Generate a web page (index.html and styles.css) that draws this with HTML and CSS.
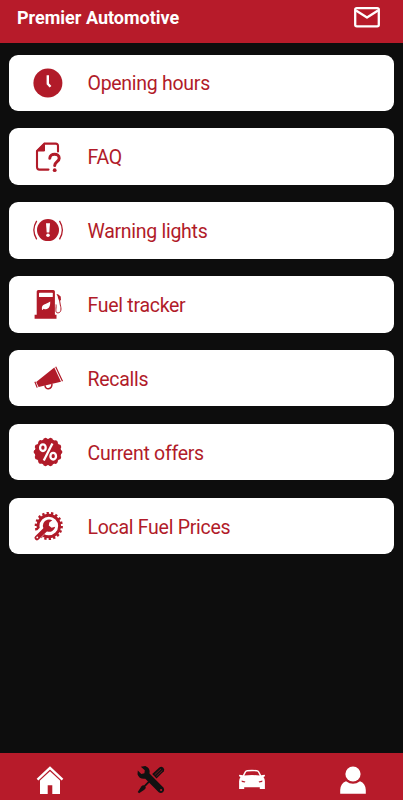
FILE: index.html
```html
<!DOCTYPE html>
<html lang="en">
<head>
    <meta charset="UTF-8">
    <meta name="viewport" content="width=device-width, initial-scale=1.0">
    <title>Premier Automotive</title>
    <link rel="stylesheet" href="styles.css">
</head>
<body>
    <header class="app-header">
        <h1 class="app-title">Premier Automotive</h1>
        <a href="#" class="mail-link" aria-label="Messages">
            <svg width="26" height="22" viewBox="0 0 26 22" fill="none" stroke="currentColor" stroke-width="2.3" stroke-linejoin="round">
                <rect x="1.2" y="1.2" width="23.6" height="18.2" rx="1.6"/>
                <path d="M2 3.5 13 10.5 24 3.5"/>
            </svg>
        </a>
    </header>

    <main class="menu">
        <a href="#" class="menu-item">
            <svg class="menu-icon" viewBox="0 0 32 32">
                <circle cx="15.9" cy="16" r="14.5" fill="currentColor"/>
                <path d="M15.8 8.3V16.8L18.5 19.8" fill="none" stroke="#fff" stroke-width="2.4"/>
            </svg>
            <span>Opening hours</span>
        </a>
        <a href="#" class="menu-item">
            <svg class="menu-icon" viewBox="0 0 32 32" fill="none" stroke="currentColor" stroke-width="2.1" stroke-linecap="round" stroke-linejoin="round">
                <path d="M26 10.5V5Q26 2.6 23.6 2.6H12.5L5 10V26Q5 28.6 7.6 28.6H16.5"/>
                <path d="M12.5 2.6V10H5Z" fill="currentColor" stroke-width="1"/>
                <path d="M17.8 17.2C18 11.9 27.2 12 27.2 17.2C27.2 20.6 22.7 20.7 22.7 24.6" stroke-width="3"/>
                <circle cx="22.7" cy="29.2" r="1.9" fill="currentColor" stroke="none"/>
            </svg>
            <span>FAQ</span>
        </a>
        <a href="#" class="menu-item">
            <svg class="menu-icon" viewBox="0 0 32 32">
                <circle cx="16" cy="16.1" r="11" fill="currentColor"/>
                <path d="M4.7 6.8Q-1 16.1 4.7 25.4M27.5 6.8Q33.2 16.1 27.5 25.4" fill="none" stroke="currentColor" stroke-width="1.3"/>
                <path d="M14 9.3H18L17.3 18.4H14.7Z" fill="#fff"/>
                <circle cx="16" cy="21.3" r="1.8" fill="#fff"/>
            </svg>
            <span>Warning lights</span>
        </a>
        <a href="#" class="menu-item">
            <svg class="menu-icon" viewBox="0 0 32 32">
                <path d="M4.7 3.5Q4.7 1.9 6.3 1.9H21.3Q22.9 1.9 22.9 3.5V26.8H24.5V30.8H2.6V26.8H4.7Z" fill="currentColor"/>
                <rect x="7" y="4.7" width="13.8" height="4.3" rx=".6" fill="#fff"/>
                <path d="M10 21.8C9 15.8 14 16.8 18.2 13.6C18.5 19.4 16 22.5 11.5 20.7L10.6 22Z" fill="#fff"/>
                <path d="M24 16.5C24.6 19 22.7 24.2 25.2 24.8C29.8 25.3 29.3 20.2 28.3 17L27.3 10.6L25 6" fill="none" stroke="currentColor" stroke-width="1"/>
                <path d="M26 6.2 28.7 8.6 29 12.2 27 12.4 25.9 9.5Z" fill="currentColor"/>
            </svg>
            <span>Fuel tracker</span>
        </a>
        <a href="#" class="menu-item">
            <svg class="menu-icon" viewBox="0 0 32 32">
                <path d="M4.2 20.1 22.3 5.4 29 19.8 6.6 25Z" fill="currentColor"/>
                <path d="M2.9 19.7 5.2 25.6M23.7 4.8 30.5 19.2" fill="none" stroke="currentColor" stroke-width="1.2"/>
                <path d="M13 23.2C13 28.4 20 28 20 21.8" fill="none" stroke="currentColor" stroke-width="1.5"/>
            </svg>
            <span>Recalls</span>
        </a>
        <a href="#" class="menu-item">
            <svg class="menu-icon" viewBox="0 0 32 32">
                <circle cx="16" cy="16" r="13.2" fill="currentColor"/>
                <circle cx="16" cy="16" r="12.3" fill="none" stroke="currentColor" stroke-width="4.2" stroke-linecap="round" pathLength="140" stroke-dasharray=".1 9.9"/>
                <g fill="none" stroke="#fff" stroke-width="2.3">
                    <ellipse cx="10.9" cy="11.7" rx="2.8" ry="3.3"/>
                    <ellipse cx="21.2" cy="20.2" rx="2.8" ry="3.3"/>
                    <path d="M20.4 7.6 11.8 24.4"/>
                </g>
            </svg>
            <span>Current offers</span>
        </a>
        <a href="#" class="menu-item">
            <svg class="menu-icon" viewBox="0 0 32 32">
                <circle cx="16.8" cy="16" r="10.8" fill="none" stroke="currentColor" stroke-width="2.9"/>
                <circle cx="16.8" cy="16" r="12.6" fill="none" stroke="currentColor" stroke-width="3" pathLength="180" stroke-dasharray="5.2 4.8"/>
                <path d="M13.5 17.5 3.8 27.5" stroke="#fff" stroke-width="8"/>
                <path d="M15 18 4.8 28" stroke="currentColor" stroke-width="4.6" stroke-linecap="round"/>
                <path d="M20.3 10.3A6.2 6.2 0 1 0 23.2 16.8L19.6 17.8 16.8 15.4 17.3 12.4Z" fill="currentColor"/>
                <circle cx="5.3" cy="27.4" r=".9" fill="#fff"/>
            </svg>
            <span>Local Fuel Prices</span>
        </a>
    </main>

    <nav class="tab-bar">
        <a href="#" class="tab" aria-label="Home">
            <svg width="28" height="28" viewBox="0 0 28 28" fill="currentColor">
                <path d="M4 14.6 14 5.2 24 14.6V28H16.3V19.2H11.7V28H4Z"/>
                <path d="M1.5 13.7 14 1.8 26.5 13.7" fill="none" stroke="currentColor" stroke-width="2.4"/>
            </svg>
        </a>
        <a href="#" class="tab active" aria-label="Services">
            <svg width="28" height="28" viewBox="0 0 28 28" fill="currentColor">
                <path d="M3.8 .8 8.3 0Q13.5 2 12.5 7.4L26.6 21.7Q28 24 26.2 26.1Q24 28 21.7 26.3L8.3 12.7Q2.2 13.5 .5 8.2L.8 4.5 4.3 8 7.4 7.2 7.8 4.3Z"/>
                <path d="M15.2 8 22.6 1.2Q24.5 .1 26.3 1.7Q28 3.4 26.8 5.2L19.5 12.4Z"/>
                <path d="M12 15.7 6.2 21.6" stroke="currentColor" stroke-width="1.8"/>
                <path d="M6.1 18.9 9 21.8 7.3 23.7 2.1 27.3 .7 25.9 4.3 20.5Z"/>
                <path d="M17.7 8.8 24 2.9M19.3 10.3 25.5 4.3" stroke="#b71b2a" stroke-width=".6"/>
                <circle cx="24.1" cy="24" r="1.1" fill="#b71b2a"/>
            </svg>
        </a>
        <a href="#" class="tab" aria-label="My car">
            <svg width="28" height="28" viewBox="0 0 28 28" fill="currentColor">
                <path d="M4.8 9.2 6.8 5.6Q7.5 4.3 9.2 4.1Q14 3.5 18.8 4.1Q20.5 4.3 21.2 5.6L23.2 9.2 26.6 8.8Q27.4 9.6 26.6 10.4L25.5 11Q27.1 13.2 26.9 16V22.9H21.8V21.2H6.2V22.9H1.1V16Q.9 13.2 2.5 11L1.4 10.4Q.6 9.6 1.4 8.8Z"/>
                <path d="M6.3 9.4 8 6.2Q8.3 5.5 9.3 5.4Q14 4.9 18.7 5.4Q19.7 5.5 20 6.2L21.7 9.4Q14 8.7 6.3 9.4Z" fill="#b71b2a"/>
                <path d="M3.6 14.4 7.4 15.6 6.8 16.5 3.8 15.9ZM24.4 14.4 20.6 15.6 21.2 16.5 24.2 15.9Z" fill="#b71b2a"/>
            </svg>
        </a>
        <a href="#" class="tab" aria-label="Profile">
            <svg width="28" height="28" viewBox="0 0 28 28" fill="currentColor">
                <circle cx="14" cy="8" r="7.6"/>
                <path d="M1.2 27.8V24Q1.5 17.2 7 15.2Q14 20.4 21 15.2Q26.5 17.2 26.8 24V27.8Z"/>
            </svg>
        </a>
    </nav>
</body>
</html>
```
FILE: styles.css
```css
* {
    margin: 0;
    padding: 0;
    box-sizing: border-box;
}

body {
    font-family: Roboto, 'Liberation Sans', sans-serif;
    background: #0d0d0d;
    height: 100vh;
    display: flex;
    flex-direction: column;
    overflow: hidden;
}

a {
    text-decoration: none;
}

.app-header {
    display: flex;
    align-items: center;
    justify-content: space-between;
    height: 42.5px;
    padding: 0 23px 7px 17px;
    background: #b71b2a;
    color: #fff;
}

.app-title {
    font-size: 18px;
    font-weight: 700;
}

.mail-link {
    height: 22px;
    color: #fff;
}

.menu {
    flex: 1;
    display: flex;
    flex-direction: column;
    gap: 17.5px;
    padding: 12px 9px;
}

.menu-item {
    display: flex;
    align-items: center;
    gap: 23.5px;
    height: 56.4px;
    padding-left: 23px;
    background: #fff;
    border-radius: 9px;
    color: #b11b29;
    font-size: 19.5px;
    letter-spacing: -0.28px;
}

.menu-item span {
    padding-top: 2px;
}

.menu-icon {
    width: 32px;
    height: 32px;
}

.tab-bar {
    display: grid;
    grid-template-columns: repeat(4, 1fr);
    height: 47px;
    padding-top: 13px;
    background: #b71b2a;
}

.tab {
    display: flex;
    justify-content: center;
    color: #fff;
}

.tab.active {
    color: #111;
}
```
